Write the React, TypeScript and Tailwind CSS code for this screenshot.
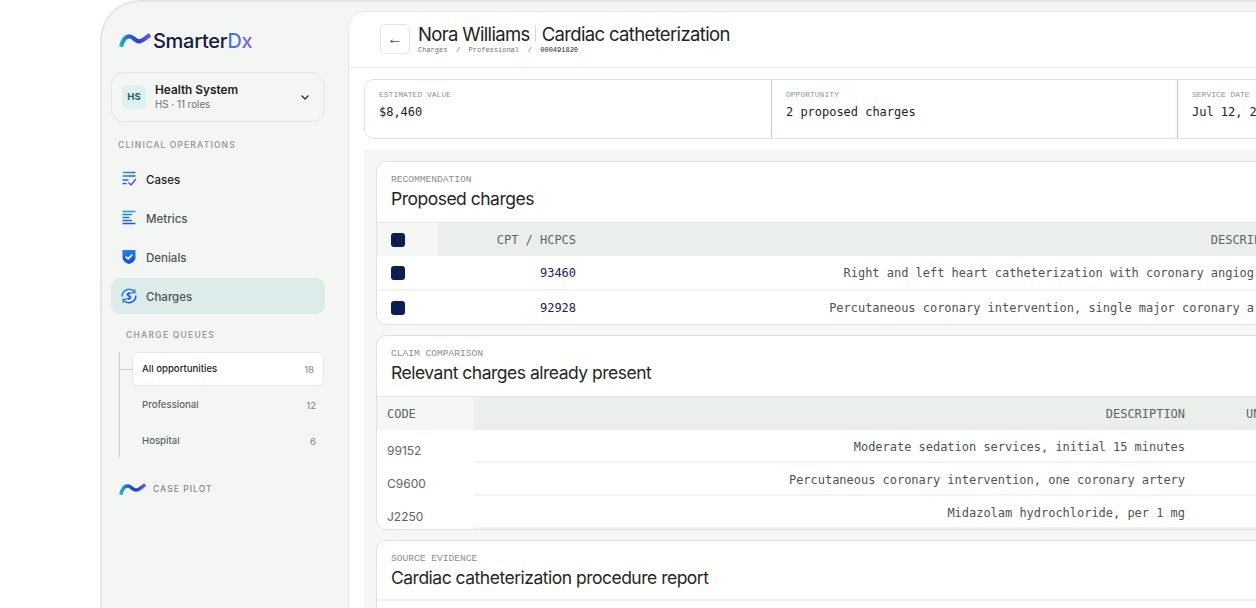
import React from "react";

const mono = "font-['DejaVu_Sans_Mono',monospace] tracking-[-0.024px]";
const thinMono = "font-['Liberation_Mono',monospace]";
const sans = "font-['Inter',sans-serif]";

function Wave({ id, className }: { id: string; className: string }) {
  return (
    <svg viewBox="0 0 32 16" className={className} fill="none">
      <defs>
        <linearGradient id={id} x1="0" y1="0" x2="32" y2="0" gradientUnits="userSpaceOnUse">
          <stop offset="0" stopColor="#19c3d6" />
          <stop offset="0.35" stopColor="#1f5fe0" />
          <stop offset="0.6" stopColor="#2a3fd0" />
          <stop offset="1" stopColor="#7a55f0" />
        </linearGradient>
      </defs>
      <path d="M2 14.800C3.500 8.500 6.500 4 11 4.500C15 5 16 9.500 20.500 9.300C24.500 9 27 5.500 31 2.800" stroke={`url(#${id})`} strokeWidth="4.200" />
    </svg>
  );
}

const gradStops = (
  <>
    <stop offset="0" stopColor="#16c0e0" />
    <stop offset="0.55" stopColor="#1d56f0" />
    <stop offset="1" stopColor="#6a3df0" />
  </>
);

function CasesIcon() {
  return (
    <svg viewBox="0 0 16 16" className="w-4 h-4" fill="none">
      <defs><linearGradient id="gc" x1="0" y1="0" x2="16" y2="16" gradientUnits="userSpaceOnUse">{gradStops}</linearGradient></defs>
      <path d="M1.500 1.500h13M1.500 5h13M1.500 9h6M1.500 12.500h4" stroke="url(#gc)" strokeWidth="1.300" />
      <path d="M7.500 11.500l2.500 2.500 5-6" stroke="#6a3df0" strokeWidth="1.400" />
    </svg>
  );
}
function MetricsIcon() {
  return (
    <svg viewBox="0 0 16 16" className="w-4 h-4" fill="none">
      <defs><linearGradient id="gm" x1="0" y1="0" x2="0" y2="16" gradientUnits="userSpaceOnUse"><stop offset="0" stopColor="#16a0e8" /><stop offset="1" stopColor="#1d4cf0" /></linearGradient></defs>
      <path d="M1.500 1.500h13M1.500 4.500h9.500M1.500 7.500h7M1.500 10.500h9.500M1.500 13.500h13" stroke="url(#gm)" strokeWidth="1.500" />
    </svg>
  );
}
function DenialsIcon() {
  return (
    <svg viewBox="0 0 16 16" className="w-4 h-4" fill="none">
      <defs><linearGradient id="gd" x1="0" y1="0" x2="0" y2="16" gradientUnits="userSpaceOnUse"><stop offset="0" stopColor="#1a8cf0" /><stop offset="1" stopColor="#1d3ee0" /></linearGradient></defs>
      <path d="M1.500 1h13v7.500c0 3-3 5.500-6.500 6.500-3.500-1-6.500-3.500-6.500-6.500z" fill="url(#gd)" />
      <path d="M4.800 7.600l2.300 2.300 4.200-4.300" stroke="#fff" strokeWidth="1.700" />
    </svg>
  );
}
function ChargesIcon() {
  return (
    <svg viewBox="0 0 16 16" className="w-4 h-4" fill="none">
      <defs><linearGradient id="gh" x1="0" y1="0" x2="16" y2="16" gradientUnits="userSpaceOnUse"><stop offset="0" stopColor="#14a8e8" /><stop offset="1" stopColor="#1d3ee8" /></linearGradient></defs>
      <path d="M1.200 8.500A6.800 6.800 0 0 1 12.800 3.300M14.800 7.500A6.800 6.800 0 0 1 3.200 12.700" stroke="url(#gh)" strokeWidth="1.600" />
      <path d="M13.800 1.200v3.400h-3.400M2.200 14.800v-3.400h3.400" stroke="url(#gh)" strokeWidth="1.300" />
      <path d="M10 6C9.600 5.300 8.900 5 8 5c-1.100 0-1.900.5-1.900 1.500 0 2 3.800 1 3.800 3 0 1-.8 1.500-1.900 1.500-.9 0-1.600-.3-2-1M8 4v8" stroke="#1d4ce8" strokeWidth="1.100" />
    </svg>
  );
}

function NavItem({ icon, label, active, dark }: { icon: React.ReactNode; label: string; active?: boolean; dark?: boolean }) {
  return (
    <div className={`h-9 flex items-center gap-[9px] pl-[10px] rounded-[9px] text-[11.500px] font-medium ${sans} ${active ? "bg-[#dcecea]" : ""} ${dark ? "text-[#1c2422]" : "text-[#4b5553]"}`}>
      {icon}
      <span className="pt-[3px]">{label}</span>
    </div>
  );
}

function Queue({ label, n, active }: { label: string; n: string; active?: boolean }) {
  return (
    <div className={`h-[34px] flex items-center justify-between pl-[9px] rounded-[6px] border text-[9.600px] font-medium ${sans} ${active ? "pr-[9px] bg-white border-[#e6e9e7] text-[#1c2422]" : "pr-[7px] border-transparent text-[#5c6664]"}`}>
      <span>{label}</span>
      <span className="mt-[2px] font-normal text-[#7b8583]">{n}</span>
    </div>
  );
}

function Sidebar() {
  return (
    <aside className="w-[246px] shrink-0 pl-[9px] pr-[23px] flex flex-col">
      <div className="h-[70px] flex items-end pb-[20px] pl-[8px] gap-[2px]">
        <Wave id="w1" className="w-[32px] h-[16px] mb-[4px]" />
        <span className={`text-[20px] leading-[22px] font-medium tracking-[-0.3px] text-[#131c44] ${sans}`}>
          Smarter<span className="bg-gradient-to-r from-[#1d7ae8] to-[#7a55f0] bg-clip-text text-transparent">Dx</span>
        </span>
      </div>
      <div className="h-[50px] border border-[#e3e7e4] rounded-[12px] flex items-center pl-[10px] pr-[13px]">
        <div className={`w-6 h-6 rounded-[6px] bg-[#dff1ef] text-[#14686a] text-[9.500px] font-bold flex items-center justify-center ${sans}`}>HS</div>
        <div className={`ml-[9px] flex-1 ${sans}`}>
          <div className="text-[11.800px] leading-[14px] font-semibold text-[#1c2422]">Health System</div>
          <div className="text-[9.800px] leading-[12px] mt-[2px] text-[#6a7472]">HS · 11 roles</div>
        </div>
        <svg viewBox="0 0 12 12" className="w-3 h-3" fill="none"><path d="M2.500 4.500L6 8l3.500-3.500" stroke="#2a3230" strokeWidth="1.300" /></svg>
      </div>
      <div className={`mt-[17px] pl-[7px] text-[8.500px] leading-[12px] font-semibold tracking-[1.15px] text-[#93a09b] ${sans}`}>CLINICAL OPERATIONS</div>
      <div className="mt-[10px] flex flex-col gap-[3px]">
        <NavItem icon={<CasesIcon />} label="Cases" dark />
        <NavItem icon={<MetricsIcon />} label="Metrics" />
        <NavItem icon={<DenialsIcon />} label="Denials" />
        <NavItem icon={<ChargesIcon />} label="Charges" active />
      </div>
      <div className={`mt-[15px] pl-[15px] text-[8.500px] leading-[12px] font-semibold tracking-[1.25px] text-[#93a09b] ${sans}`}>CHARGE QUEUES</div>
      <div className="mt-[11px] ml-[8px] mr-px flex">
        <div className="relative w-[13px] border-l border-[#c9cfcc] h-[106px]">
          <div className="absolute left-0 top-[17px] w-[13px] border-t border-[#c9cfcc]" />
        </div>
        <div className="flex-1 flex flex-col gap-[2px]">
          <Queue label="All opportunities" n="18" active />
          <Queue label="Professional" n="12" />
          <Queue label="Hospital" n="6" />
        </div>
      </div>
      <div className="mt-[24px] ml-[8px] flex items-center gap-[7px]">
        <Wave id="w2" className="w-[27px] h-[14px]" />
        <span className={`text-[8.500px] font-medium tracking-[1.05px] text-[#7d8986] ${sans}`}>CASE PILOT</span>
      </div>
    </aside>
  );
}

function Metric({ label, value, w }: { label: string; value: string; w: string }) {
  return (
    <div className={`${w} h-full pl-[14px] pt-[9px] border-r border-[#b9cce0] last:border-r-0`}>
      <div className={`text-[8px] leading-[12px] text-[#8b9693] ${thinMono}`}>{label}</div>
      <div className={`text-[12px] leading-[16px] mt-[3px] text-[#1c2422] ${mono}`}>{value}</div>
    </div>
  );
}

function SectionHead({ eyebrow, title, extra }: { eyebrow: string; title: string; extra?: string }) {
  return (
    <div className={`h-[60px] pl-[14px] pt-[12px] ${extra ?? ""}`}>
      <div className={`text-[9.600px] leading-[12px] text-[#858f8c] ${thinMono}`}>{eyebrow}</div>
      <div className={`text-[17.500px] leading-[24px] mt-[1px] tracking-[-0.5px] text-[#1f2725] ${sans}`}>{title}</div>
    </div>
  );
}

function Check() {
  return <div className="w-[14px] h-[14px] rounded-[3px] bg-[#0b1f52]" />;
}

function ProposedRow({ code, desc, last }: { code: string; desc: string; last?: boolean }) {
  return (
    <div className={`flex items-center ${mono} text-[12px] ${last ? "h-[33px]" : "h-[35px] pt-px border-b-2 border-[#f2f4f2]"}`}>
      <div className="w-[61px] pl-[14px] shrink-0"><Check /></div>
      <div className="w-[138px] text-right shrink-0 text-[#16245a]">{code}</div>
      <div className="w-[714px] text-right shrink-0 text-[#4b5553]">{desc}</div>
    </div>
  );
}

function ClaimRow({ code, desc }: { code: string; desc: string }) {
  return (
    <div className={`h-[33px] flex text-[12px] ${mono}`}>
      <div className={`w-[97px] shrink-0 pl-[10px] pt-[12px] text-[#5c6664] tracking-normal ${sans}`}>{code}</div>
      <div className="flex-1 border-b-2 border-[#f2f4f2]">
        <div className="w-[711px] text-right pt-[8px] text-[#4b5553]">{desc}</div>
      </div>
    </div>
  );
}

function Main() {
  return (
    <main className="flex-1 mt-[9px] bg-white border border-[#e6e9e7] rounded-tl-[16px] overflow-hidden">
      <div className="h-[56px] border-b border-[#e6e9e7] flex items-center pl-[31px]">
        <div className="w-[30px] h-[30px] -mt-[2px] border border-[#e3e7e4] rounded-[5px] flex items-center justify-center text-[16px] text-[#4b5553] font-['Liberation_Sans',sans-serif]">←</div>
        <div className="ml-[8px] -mt-[3px]">
          <div className={`text-[18.500px] leading-[24px] font-normal tracking-[-0.65px] text-[#1c2422] flex items-center ${sans}`}>
            <span>Nora Williams</span>
            <span className="w-px h-[17px] bg-[#d5dad7] mx-[5.500px]" />
            <span>Cardiac catheterization</span>
          </div>
          <div className={`text-[7px] leading-[9px] text-[#6a7472] flex gap-[8.500px] ${thinMono}`}>
            <span>Charges</span><span>/</span><span>Professional</span><span>/</span><span className="text-[#1c2422]">000491820</span>
          </div>
        </div>
      </div>
      <div className="pl-[15px] pt-[11px]">
        <div className="w-[1260px] h-[60px] border border-[#dde2df] rounded-[10px] flex">
          <Metric w="w-[407px]" label="ESTIMATED VALUE" value="$8,460" />
          <Metric w="w-[406px]" label="OPPORTUNITY" value="2 proposed charges" />
          <Metric w="w-[440px]" label="SERVICE DATE" value="Jul 12, 2024" />
        </div>
      </div>
      <div className="mt-[11px] ml-[15px] w-[1300px] bg-[#f5f7f5] pl-[12px] pt-[11px] flex flex-col gap-[10px]">
        <section className="w-[1200px] h-[164px] bg-white border border-[#dde2df] rounded-[10px] overflow-hidden">
          <SectionHead eyebrow="RECOMMENDATION" title="Proposed charges" />
          <div className={`h-[34px] flex items-center border-t border-[#e6eae7] bg-[#ebefec] ${mono} text-[12px] text-[#5c6664]`}>
            <div className="w-[61px] h-full pl-[14px] shrink-0 bg-[#f5f7f5] flex items-center"><Check /></div>
            <div className="w-[138px] text-right shrink-0">CPT / HCPCS</div>
            <div className="w-[714px] text-right shrink-0">DESCRIPTION</div>
          </div>
          <ProposedRow code="93460" desc="Right and left heart catheterization with coronary angiography" />
          <ProposedRow code="92928" desc="Percutaneous coronary intervention, single major coronary artery" last />
        </section>
        <section className="w-[1200px] h-[195px] bg-white border border-[#dde2df] rounded-[10px] overflow-hidden">
          <SectionHead eyebrow="CLAIM COMPARISON" title="Relevant charges already present" />
          <div className={`h-[34px] flex items-center border-t border-[#e6eae7] ${mono} text-[12px] text-[#5c6664]`}>
            <div className="w-[97px] h-full pl-[10px] bg-[#f5f7f5] flex items-center shrink-0">CODE</div>
            <div className="flex-1 h-full bg-[#ebefec] flex items-center">
              <span className="w-[711px] text-right shrink-0">DESCRIPTION</span>
              <span className="ml-[61px]">UNITS</span>
            </div>
          </div>
          <ClaimRow code="99152" desc="Moderate sedation services, initial 15 minutes" />
          <ClaimRow code="C9600" desc="Percutaneous coronary intervention, one coronary artery" />
          <ClaimRow code="J2250" desc="Midazolam hydrochloride, per 1 mg" />
        </section>
        <section className="w-[1200px] h-[120px] bg-white border border-[#dde2df] rounded-[10px] overflow-hidden">
          <SectionHead eyebrow="SOURCE EVIDENCE" title="Cardiac catheterization procedure report" extra="border-b-2 border-[#eef1ef]" />
        </section>
      </div>
    </main>
  );
}

export default function App() {
  return (
    <div className="w-[1256px] h-[608px] overflow-hidden bg-white pl-[100px]">
      <div className="w-[1500px] h-[640px] flex bg-[#f4f6f4] border-2 border-b-0 border-[#e4e6e4] rounded-tl-[40px]">
        <Sidebar />
        <Main />
      </div>
    </div>
  );
}
